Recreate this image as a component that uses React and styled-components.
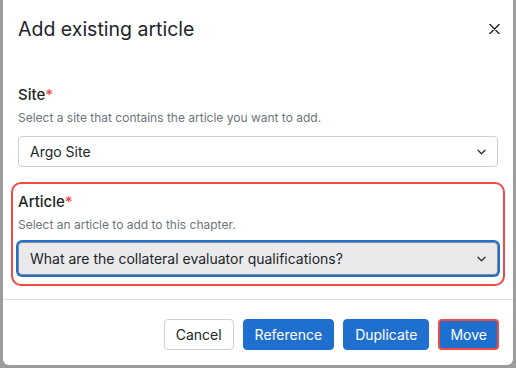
import React from "react";
import styled, { createGlobalStyle } from "styled-components";

const Global = createGlobalStyle`
  html, body { margin: 0; padding: 0; }
  body {
    background: #9c9c9c;
    font-family: Inter, "Noto Sans", sans-serif;
    color: #212529;
  }
`;

const Modal = styled.div`
  box-sizing: border-box;
  width: 510px;
  height: 365px;
  margin: 0 3px;
  background: #fff;
  border-radius: 0 0 6px 6px;
  display: flex;
  flex-direction: column;
`;

const Header = styled.div`
  display: flex;
  align-items: center;
  justify-content: space-between;
  padding: 17px 13px 0 15px;
  height: 24px;
`;

const Title = styled.h1`
  margin: 0;
  font-size: 19.5px;
  font-weight: 400;
  line-height: 24px;
`;

const Close = styled.button`
  border: 0;
  background: none;
  padding: 0;
  width: 12px;
  height: 12px;
  display: flex;
  align-items: center;
  justify-content: center;
`;

const Body = styled.div`
  padding: 44px 15px 0 15px;
  flex: 1;
`;

const Group = styled.div`
  display: flex;
  flex-direction: column;
  ${(p) =>
    p.$highlight &&
    `
    margin: 15px -7px 0 -7px;
    padding: 8px 5px 9px 5px;
    border: 2px solid #f24a43;
    border-radius: 10px;
  `}
`;

const Label = styled.label`
  font-size: 15px;
  font-weight: 500;
  line-height: 20px;
`;

const Star = styled.span`
  color: #f24a43;
`;

const Help = styled.div`
  font-size: 12px;
  color: #6c757d;
  line-height: 16px;
  margin-top: 5px;
`;

const Select = styled.div`
  box-sizing: border-box;
  margin-top: ${(p) => (p.$focused ? "9px" : "10px")};
  height: ${(p) => (p.$focused ? "33px" : "31px")};
  display: flex;
  align-items: center;
  justify-content: space-between;
  padding: 0 11px 0 11px;
  font-size: 14px;
  border-radius: 4px;
  background: ${(p) => (p.$focused ? "#eaeaed" : "#fff")};
  border: 1px solid ${(p) => (p.$focused ? "#8a8a8f" : "#cfcfd3")};
  box-shadow: ${(p) => (p.$focused ? "0 0 0 2px #1f6fcf" : "none")};
`;

const Footer = styled.div`
  border-top: 1px solid #dee2e6;
  display: flex;
  justify-content: flex-end;
  align-items: center;
  gap: 9px;
  padding: 19px 14px 15px 14px;
`;

const Button = styled.button`
  box-sizing: border-box;
  height: 31px;
  padding: 0 ${(p) => (p.$ring ? "10px" : "11px")};
  font-family: inherit;
  font-size: 14px;
  border-radius: 4px;
  border: ${(p) => (p.$ring ? "2px solid #f24a43" : `1px solid ${p.$primary ? "#1f6fcf" : "#cfcfd3"}`)};
  background: ${(p) => (p.$primary ? "#1f6fcf" : "#fff")};
  color: ${(p) => (p.$primary ? "#fff" : "#212529")};
`;

const Chevron = () => (
  <svg width="9" height="6" viewBox="0 0 9 6" fill="none">
    <path d="M1 1.2l3.5 3.5 3.5-3.5" stroke="#333" strokeWidth="1.4" strokeLinecap="round" strokeLinejoin="round" />
  </svg>
);

export default function App() {
  return (
    <>
      <Global />
      <Modal>
        <Header>
          <Title>Add existing article</Title>
          <Close aria-label="Close">
            <svg width="11" height="10" viewBox="0 0 11 10">
              <path d="M1 0.5l9 9M10 0.5l-9 9" stroke="#222" strokeWidth="1.4" strokeLinecap="round" />
            </svg>
          </Close>
        </Header>
        <Body>
          <Group>
            <Label>
              Site<Star>*</Star>
            </Label>
            <Help>Select a site that contains the article you want to add.</Help>
            <Select>
              <span>Argo Site</span>
              <Chevron />
            </Select>
          </Group>
          <Group $highlight>
            <Label>
              Article<Star>*</Star>
            </Label>
            <Help>Select an article to add to this chapter.</Help>
            <Select $focused>
              <span>What are the collateral evaluator qualifications?</span>
              <Chevron />
            </Select>
          </Group>
        </Body>
        <Footer>
          <Button>Cancel</Button>
          <Button $primary>Reference</Button>
          <Button $primary>Duplicate</Button>
          <Button $primary $ring>Move</Button>
        </Footer>
      </Modal>
    </>
  );
}
